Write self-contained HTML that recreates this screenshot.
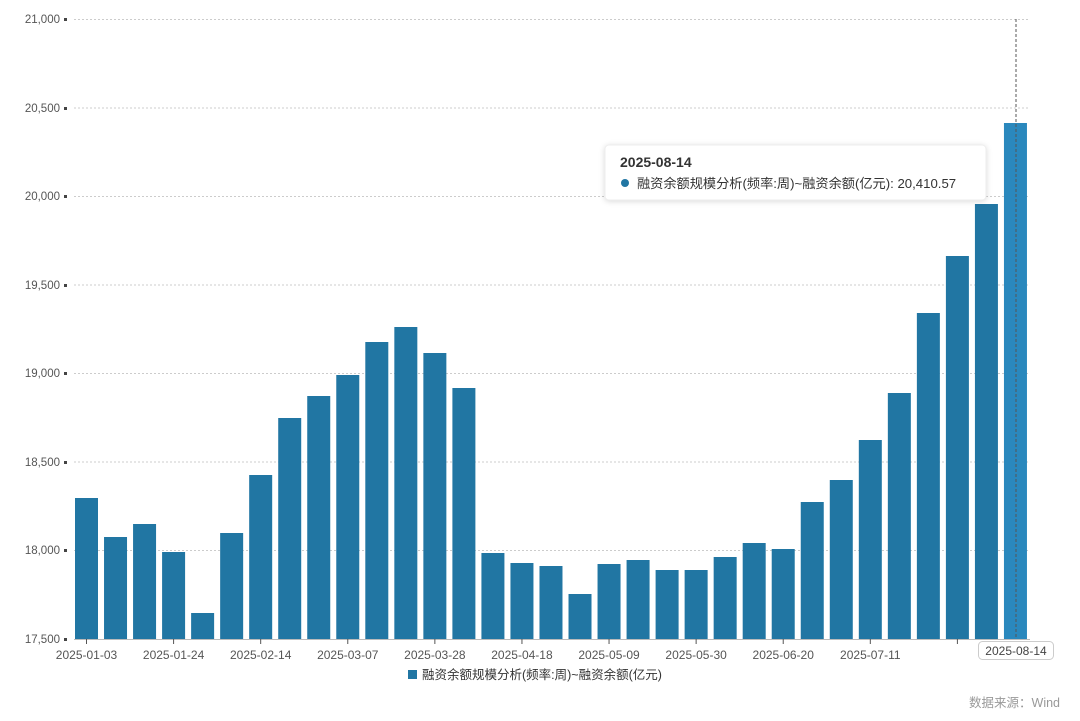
<!DOCTYPE html>
<html><head><meta charset="utf-8"><style>
body{margin:0;background:#fff;width:1080px;height:716px;overflow:hidden;font-family:"Liberation Sans","Noto Sans CJK SC",sans-serif}
</style></head><body>
<svg width="1080" height="716" xmlns="http://www.w3.org/2000/svg" font-family="Liberation Sans, Noto Sans CJK SC, sans-serif">
<g stroke="#ccc" stroke-dasharray="2,2" stroke-width="1">
<line x1="74" x2="1030" y1="19.5" y2="19.5"/><line x1="74" x2="1030" y1="108" y2="108"/>
<line x1="74" x2="1030" y1="196.5" y2="196.5"/><line x1="74" x2="1030" y1="285" y2="285"/>
<line x1="74" x2="1030" y1="373.5" y2="373.5"/><line x1="74" x2="1030" y1="462" y2="462"/>
<line x1="74" x2="1030" y1="550.5" y2="550.5"/>
</g>
<g font-size="11.5" fill="#555" text-anchor="end">
<text x="60" y="23">21,000</text><text x="60" y="112">20,500</text><text x="60" y="200">20,000</text>
<text x="60" y="289">19,500</text><text x="60" y="377">19,000</text><text x="60" y="466">18,500</text>
<text x="60" y="554">18,000</text><text x="60" y="643">17,500</text>
</g>
<g fill="#444"><rect x="64" y="18" width="3" height="3"/><rect x="64" y="107" width="3" height="3"/><rect x="64" y="195" width="3" height="3"/><rect x="64" y="284" width="3" height="3"/><rect x="64" y="372" width="3" height="3"/><rect x="64" y="461" width="3" height="3"/><rect x="64" y="549" width="3" height="3"/><rect x="64" y="638" width="3" height="3"/></g>
<g fill="#2176a3" id="bars"></g>
<line x1="74" x2="1030" y1="639.5" y2="639.5" stroke="#bbb"/>
<g stroke="#555" id="ticks"></g>
<g font-size="12" fill="#555" text-anchor="middle" id="labels"></g>
<line x1="1016" x2="1016" y1="19" y2="639" stroke="#555" stroke-dasharray="3,2"/>
<rect x="978.5" y="641.5" width="75" height="18" rx="4" fill="#fff" stroke="#ccc"/>
<text x="1016" y="655" font-size="12" fill="#444" text-anchor="middle">2025-08-14</text>
<rect x="408" y="670" width="9" height="9" fill="#2176a3"/>
<text x="422" y="679" font-size="12.5" fill="#333">融资余额规模分析(频率:周)~融资余额(亿元)</text>
<text x="1060" y="707" font-size="12.5" fill="#999" text-anchor="end">数据来源：Wind</text>
<rect x="605" y="145" width="381" height="55" rx="4" fill="#fff" stroke="#eee"  style="filter:drop-shadow(0 1px 3px rgba(0,0,0,.15))"/>
<text x="620" y="167" font-size="14" font-weight="bold" fill="#333">2025-08-14</text>
<circle cx="625" cy="183" r="4" fill="#2176a3"/>
<text x="637" y="188" font-size="13.2" fill="#333">融资余额规模分析(频率:周)~融资余额(亿元): 20,410.57</text>
</svg>
<script>
var tops=[498,537,524,552,613,533,475,418,396,375,342,327,353,388,553,563,566,594,564,560,570,570,557,543,549,502,480,440,393,313,256,204,123];
var labs={0:"2025-01-03",3:"2025-01-24",6:"2025-02-14",9:"2025-03-07",12:"2025-03-28",15:"2025-04-18",18:"2025-05-09",21:"2025-05-30",24:"2025-06-20",27:"2025-07-11"};
var b="",t="",l="";
for(var i=0;i<33;i++){var c=86.5+i*29.03;
b+='<rect x="'+(c-11.5)+'" y="'+tops[i]+'" width="23" height="'+(639-tops[i])+'"'+(i==32?' fill="#2a88bd"':'')+'/>';
if(i%3==0){t+='<line x1="'+c+'" x2="'+c+'" y1="639" y2="644"/>';}
if(labs[i])l+='<text x="'+c+'" y="659">'+labs[i]+'</text>';}
document.getElementById("bars").innerHTML=b;document.getElementById("ticks").innerHTML=t;document.getElementById("labels").innerHTML=l;
</script>
</body></html>
